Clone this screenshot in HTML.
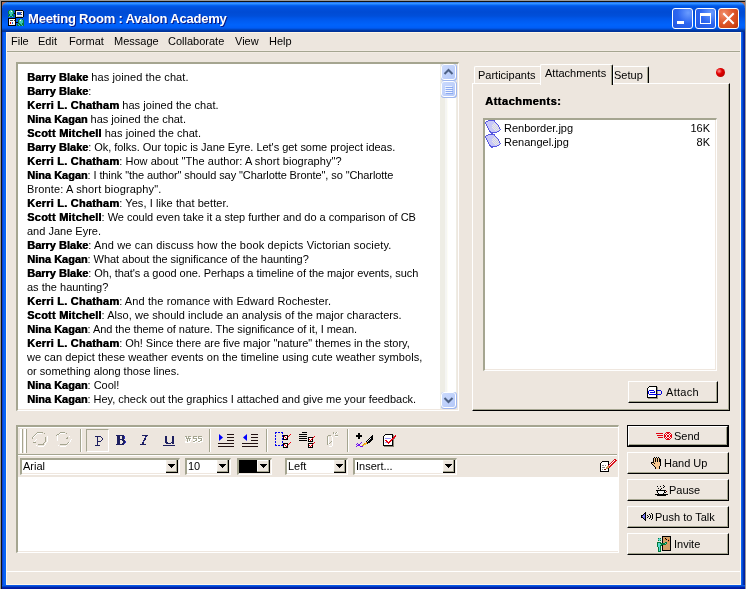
<!DOCTYPE html>
<html><head><meta charset="utf-8">
<style>
*{box-sizing:border-box}
html,body{margin:0;padding:0}
body{width:746px;height:589px;position:relative;overflow:hidden;background:#ede6de;font-family:"Liberation Sans",sans-serif;font-size:11px;color:#000}
.a{position:absolute}
.t{position:absolute;white-space:nowrap;line-height:14px}
.sunk{position:absolute;border-top:2px solid #a5a590;border-left:2px solid #a5a590;border-right:1px solid #fff;border-bottom:1px solid #fff;box-shadow:inset -1px -1px 0 #efe7df}
.btn{position:absolute;background:#ede6de;border-top:1px solid #fff;border-left:1px solid #fff;border-right:1px solid #000;border-bottom:1px solid #000;box-shadow:inset -1px -1px 0 #a5a590}
.combo{position:absolute;background:#fff;border-top:2px solid #a5a590;border-left:2px solid #a5a590;border-right:1px solid #fff;border-bottom:1px solid #fff;box-shadow:inset -1px -1px 0 #efe7df}
.dd{position:absolute;top:0;width:13px;height:14px;background:#ede6de;border-top:1px solid #efe7df;border-left:1px solid #efe7df;border-right:1px solid #000;border-bottom:1px solid #000;box-shadow:inset 1px 1px 0 #fff, inset -1px -1px 0 #a5a590}
.dd:after{content:"";position:absolute;left:3px;top:5px;border-left:3.5px solid transparent;border-right:3.5px solid transparent;border-top:4px solid #000}
.sep{position:absolute;top:429px;width:2px;height:23px;border-left:1px solid #a5a590;border-right:1px solid #fff}
#chat div{height:14px;line-height:14px;white-space:nowrap}
#chat b,.bb{text-shadow:0.5px 0 0 #000}
</style></head><body><div style="position:absolute;left:0;top:0;width:746px;height:589px;overflow:hidden;will-change:transform">
<!-- window frame -->
<div class="a" style="left:0;top:0;width:746px;height:1px;background:#9a9a9a"></div>
<div class="a" style="left:0;top:0;width:1px;height:589px;background:#9a9a9a"></div>
<div class="a" style="left:745px;top:0;width:1px;height:589px;background:#9a9a9a"></div>
<div class="a" style="left:1px;top:1px;width:744px;height:1px;background:#111"></div>
<div class="a" style="left:1px;top:1px;width:1px;height:588px;background:#111"></div>
<!-- title bar -->
<div class="a" style="left:2px;top:2px;width:743px;height:30px;border-radius:6px 6px 0 0;background:linear-gradient(to bottom,#0a5ff0 0px,#3d95ff 1px,#2b8cff 2px,#0a6af6 3px,#0058e8 4px,#0050dc 6px,#004bd4 10px,#004fda 14px,#0055e6 16px,#005cf2 19px,#0063fc 23px,#005df6 26px,#004ed6 27px,#0040b4 28px,#00339a 29px)"></div>
<div class="a" style="left:2px;top:2px;width:5px;height:5px;background:#b0705a;z-index:-1"></div><div class="a" style="left:740px;top:2px;width:5px;height:5px;background:#b0705a;z-index:-1"></div>
<!-- side frames -->
<div class="a" style="left:2px;top:32px;width:4px;height:557px;background:linear-gradient(to right,#0a28c8,#0855e8 1px,#0860f0 2px,#0a66f4 3px)"></div>
<div class="a" style="left:741px;top:32px;width:4px;height:557px;background:linear-gradient(to right,#1a70f8 0,#0858e8 1px,#0040c0 2px,#0020a0 3px)"></div>
<div class="a" style="left:2px;top:585px;width:743px;height:4px;background:linear-gradient(to bottom,#0860f0 0,#0850e0 1px,#0030b0 2px,#0018a0 3px)"></div>
<div class="a" style="left:6px;top:32px;width:1px;height:553px;background:#fff6e8"></div>
<div class="a" style="left:740px;top:32px;width:1px;height:553px;background:#fff6e8"></div>
<div class="a" style="left:6px;top:584px;width:735px;height:1px;background:#fff6e8"></div>
<div class="a" style="left:6px;top:32px;width:735px;height:1px;background:#fff6e8"></div>
<!-- title icon -->
<svg class="a" style="left:8px;top:10px" width="16" height="16" shape-rendering="crispEdges"><rect x="1" y="0" width="1" height="1" fill="#0a7a3a"/><rect x="2" y="0" width="2" height="1" fill="#38c8b8"/><rect x="4" y="0" width="1" height="1" fill="#0a7a3a"/><rect x="7" y="0" width="8" height="1" fill="#000"/><rect x="0" y="1" width="1" height="1" fill="#0a7a3a"/><rect x="1" y="1" width="2" height="1" fill="#38c8b8"/><rect x="3" y="1" width="1" height="1" fill="#f8f8f8"/><rect x="4" y="1" width="1" height="1" fill="#38c8b8"/><rect x="5" y="1" width="1" height="1" fill="#0a7a3a"/><rect x="7" y="1" width="1" height="1" fill="#000"/><rect x="8" y="1" width="7" height="1" fill="#f8f8f8"/><rect x="15" y="1" width="1" height="1" fill="#000"/><rect x="0" y="2" width="1" height="1" fill="#0a7a3a"/><rect x="1" y="2" width="4" height="1" fill="#38c8b8"/><rect x="5" y="2" width="1" height="1" fill="#0a7a3a"/><rect x="7" y="2" width="1" height="1" fill="#000"/><rect x="8" y="2" width="1" height="1" fill="#f8f8f8"/><rect x="9" y="2" width="4" height="1" fill="#2050c8"/><rect x="13" y="2" width="1" height="1" fill="#404040"/><rect x="14" y="2" width="1" height="1" fill="#f8f8f8"/><rect x="15" y="2" width="1" height="1" fill="#000"/><rect x="0" y="3" width="1" height="1" fill="#0a7a3a"/><rect x="1" y="3" width="4" height="1" fill="#38c8b8"/><rect x="5" y="3" width="1" height="1" fill="#0a7a3a"/><rect x="6" y="3" width="2" height="1" fill="#000"/><rect x="8" y="3" width="1" height="1" fill="#f8f8f8"/><rect x="9" y="3" width="4" height="1" fill="#2050c8"/><rect x="13" y="3" width="2" height="1" fill="#f8f8f8"/><rect x="15" y="3" width="1" height="1" fill="#000"/><rect x="1" y="4" width="1" height="1" fill="#0a7a3a"/><rect x="2" y="4" width="2" height="1" fill="#38c8b8"/><rect x="4" y="4" width="1" height="1" fill="#0a7a3a"/><rect x="7" y="4" width="1" height="1" fill="#000"/><rect x="8" y="4" width="1" height="1" fill="#f8f8f8"/><rect x="9" y="4" width="4" height="1" fill="#2050c8"/><rect x="13" y="4" width="1" height="1" fill="#404040"/><rect x="14" y="4" width="1" height="1" fill="#f8f8f8"/><rect x="15" y="4" width="1" height="1" fill="#000"/><rect x="0" y="5" width="2" height="1" fill="#0a7a3a"/><rect x="2" y="5" width="2" height="1" fill="#38c8b8"/><rect x="4" y="5" width="2" height="1" fill="#0a7a3a"/><rect x="7" y="5" width="1" height="1" fill="#000"/><rect x="8" y="5" width="7" height="1" fill="#f8f8f8"/><rect x="15" y="5" width="1" height="1" fill="#000"/><rect x="0" y="6" width="1" height="1" fill="#0a7a3a"/><rect x="1" y="6" width="1" height="1" fill="#38c8b8"/><rect x="2" y="6" width="2" height="1" fill="#0a7a3a"/><rect x="4" y="6" width="1" height="1" fill="#38c8b8"/><rect x="5" y="6" width="1" height="1" fill="#0a7a3a"/><rect x="7" y="6" width="1" height="1" fill="#000"/><rect x="8" y="6" width="1" height="1" fill="#f8f8f8"/><rect x="9" y="6" width="5" height="1" fill="#c8c8c8"/><rect x="14" y="6" width="1" height="1" fill="#f8f8f8"/><rect x="15" y="6" width="1" height="1" fill="#000"/><rect x="7" y="7" width="8" height="1" fill="#000"/><rect x="0" y="8" width="8" height="1" fill="#000"/><rect x="0" y="9" width="1" height="1" fill="#000"/><rect x="1" y="9" width="6" height="1" fill="#f8f8f8"/><rect x="7" y="9" width="1" height="1" fill="#000"/><rect x="11" y="9" width="1" height="1" fill="#0a7a3a"/><rect x="12" y="9" width="2" height="1" fill="#38c8b8"/><rect x="14" y="9" width="1" height="1" fill="#0a7a3a"/><rect x="0" y="10" width="1" height="1" fill="#000"/><rect x="1" y="10" width="1" height="1" fill="#f8f8f8"/><rect x="2" y="10" width="3" height="1" fill="#404040"/><rect x="5" y="10" width="1" height="1" fill="#f8f8f8"/><rect x="6" y="10" width="1" height="1" fill="#404040"/><rect x="7" y="10" width="1" height="1" fill="#000"/><rect x="10" y="10" width="1" height="1" fill="#0a7a3a"/><rect x="11" y="10" width="1" height="1" fill="#38c8b8"/><rect x="12" y="10" width="1" height="1" fill="#f8f8f8"/><rect x="13" y="10" width="2" height="1" fill="#38c8b8"/><rect x="15" y="10" width="1" height="1" fill="#0a7a3a"/><rect x="0" y="11" width="1" height="1" fill="#000"/><rect x="1" y="11" width="6" height="1" fill="#f8f8f8"/><rect x="7" y="11" width="1" height="1" fill="#000"/><rect x="10" y="11" width="1" height="1" fill="#0a7a3a"/><rect x="11" y="11" width="4" height="1" fill="#38c8b8"/><rect x="15" y="11" width="1" height="1" fill="#0a7a3a"/><rect x="0" y="12" width="1" height="1" fill="#000"/><rect x="1" y="12" width="1" height="1" fill="#f8f8f8"/><rect x="2" y="12" width="1" height="1" fill="#e00000"/><rect x="3" y="12" width="1" height="1" fill="#f8f8f8"/><rect x="4" y="12" width="1" height="1" fill="#2050c8"/><rect x="5" y="12" width="2" height="1" fill="#f8f8f8"/><rect x="7" y="12" width="3" height="1" fill="#000"/><rect x="10" y="12" width="1" height="1" fill="#0a7a3a"/><rect x="11" y="12" width="4" height="1" fill="#38c8b8"/><rect x="15" y="12" width="1" height="1" fill="#0a7a3a"/><rect x="0" y="13" width="1" height="1" fill="#000"/><rect x="1" y="13" width="1" height="1" fill="#f8f8f8"/><rect x="2" y="13" width="1" height="1" fill="#e00000"/><rect x="3" y="13" width="1" height="1" fill="#f8f8f8"/><rect x="4" y="13" width="1" height="1" fill="#2050c8"/><rect x="5" y="13" width="2" height="1" fill="#f8f8f8"/><rect x="7" y="13" width="1" height="1" fill="#000"/><rect x="10" y="13" width="2" height="1" fill="#0a7a3a"/><rect x="12" y="13" width="2" height="1" fill="#38c8b8"/><rect x="14" y="13" width="2" height="1" fill="#0a7a3a"/><rect x="0" y="14" width="1" height="1" fill="#000"/><rect x="1" y="14" width="6" height="1" fill="#f8f8f8"/><rect x="7" y="14" width="1" height="1" fill="#000"/><rect x="9" y="14" width="1" height="1" fill="#0a7a3a"/><rect x="10" y="14" width="1" height="1" fill="#38c8b8"/><rect x="11" y="14" width="2" height="1" fill="#0a7a3a"/><rect x="13" y="14" width="1" height="1" fill="#38c8b8"/><rect x="14" y="14" width="2" height="1" fill="#0a7a3a"/><rect x="0" y="15" width="8" height="1" fill="#000"/><rect x="9" y="15" width="2" height="1" fill="#0a7a3a"/><rect x="11" y="15" width="1" height="1" fill="#38c8b8"/><rect x="12" y="15" width="2" height="1" fill="#0a7a3a"/><rect x="14" y="15" width="1" height="1" fill="#38c8b8"/><rect x="15" y="15" width="1" height="1" fill="#0a7a3a"/></svg>
<div class="t" style="left:28px;top:10px;font-size:13px;font-weight:bold;color:#fff;line-height:18px;text-shadow:1px 1px 0 #0a1883;letter-spacing:-0.2px">Meeting Room : Avalon Academy</div>
<!-- window buttons -->
<div class="a" style="left:672px;top:8px;width:21px;height:21px;border:1px solid #fff;border-radius:3px;background:radial-gradient(circle at 80% 20%,#6a9cff,#2d66f0 50%,#1f55e0)"><div class="a" style="left:4px;top:12px;width:7px;height:3px;background:#fff"></div></div>
<div class="a" style="left:695px;top:8px;width:21px;height:21px;border:1px solid #fff;border-radius:3px;background:radial-gradient(circle at 80% 20%,#6a9cff,#2d66f0 50%,#1f55e0)"><div class="a" style="left:4px;top:4px;width:11px;height:11px;border:1px solid #fff;border-top-width:3px"></div></div>
<div class="a" style="left:718px;top:8px;width:21px;height:21px;border:1px solid #fff;border-radius:3px;background:radial-gradient(circle at 25% 25%,#f0906c,#e0582c 45%,#d04818 75%,#b83008)">
 <svg class="a" style="left:0;top:0" width="19" height="19"><path d="M5 5 L14 14 M14 5 L5 14" stroke="#fff" stroke-width="2" stroke-linecap="square"/></svg></div>
<!-- menu -->
<div class="t" style="left:11px;top:34px">File</div>
<div class="t" style="left:38px;top:34px">Edit</div>
<div class="t" style="left:69px;top:34px">Format</div>
<div class="t" style="left:114px;top:34px">Message</div>
<div class="t" style="left:168px;top:34px">Collaborate</div>
<div class="t" style="left:235px;top:34px">View</div>
<div class="t" style="left:269px;top:34px">Help</div>
<div class="a" style="left:7px;top:51px;width:733px;height:1px;background:#a5a590"></div>
<div class="a" style="left:7px;top:52px;width:733px;height:1px;background:#f3ece4"></div><div class="a" style="left:7px;top:50px;width:733px;height:1px;background:#f1eae2"></div>
<!-- chat box -->
<div class="sunk" style="left:16px;top:62px;width:443px;height:349px;background:#fff"></div>
<div id="chat" class="a" style="left:27px;top:70px;width:410px">
<div><b>Barry Blake</b><span style="letter-spacing:0.095px"> has joined the chat.</span></div>
<div><b>Barry Blake</b>:</div>
<div><b style="letter-spacing:0.22px">Kerri L. Chatham</b><span style="letter-spacing:0.048px"> has joined the chat.</span></div>
<div><b>Nina Kagan</b> has joined the chat.</div>
<div><b style="letter-spacing:0.22px">Scott Mitchell</b><span style="letter-spacing:0.048px"> has joined the chat.</span></div>
<div><b>Barry Blake</b><span style="letter-spacing:-0.030px">: Ok, folks. Our topic is Jane Eyre. Let's get some project ideas.</span></div>
<div><b style="letter-spacing:0.22px">Kerri L. Chatham</b><span style="letter-spacing:0.057px">: How about "The author: A short biography"?</span></div>
<div><b>Nina Kagan</b><span style="letter-spacing:-0.090px">: I think "the author" should say "Charlotte Bronte", so "Charlotte</span></div>
<div><span style="letter-spacing:0.148px">Bronte: A short biography".</span></div>
<div><b style="letter-spacing:0.22px">Kerri L. Chatham</b><span style="letter-spacing:0.077px">: Yes, I like that better.</span></div>
<div><b style="letter-spacing:0.22px">Scott Mitchell</b><span style="letter-spacing:-0.016px">: We could even take it a step further and do a comparison of CB</span></div>
<div>and Jane Eyre.</div>
<div><b>Barry Blake</b><span style="letter-spacing:0.150px">: And we can discuss how the book depicts Victorian society.</span></div>
<div><b>Nina Kagan</b><span style="letter-spacing:-0.043px">: What about the significance of the haunting?</span></div>
<div><b>Barry Blake</b><span style="letter-spacing:-0.058px">: Oh, that's a good one. Perhaps a timeline of the major events, such</span></div>
<div>as the haunting?</div>
<div><b style="letter-spacing:0.22px">Kerri L. Chatham</b><span style="letter-spacing:0.100px">: And the romance with Edward Rochester.</span></div>
<div><b style="letter-spacing:0.22px">Scott Mitchell</b><span style="letter-spacing:0.048px">: Also, we should include an analysis of the major characters.</span></div>
<div><b>Nina Kagan</b><span style="letter-spacing:-0.052px">: And the theme of nature. The significance of it, I mean.</span></div>
<div><b style="letter-spacing:0.22px">Kerri L. Chatham</b><span style="letter-spacing:-0.032px">: Oh! Since there are five major "nature" themes in the story,</span></div>
<div><span style="letter-spacing:0.051px">we can depict these weather events on the timeline using cute weather symbols,</span></div>
<div>or something along those lines.</div>
<div><b>Nina Kagan</b>: Cool!</div>
<div><b>Nina Kagan</b><span style="letter-spacing:-0.030px">: Hey, check out the graphics I attached and give me your feedback.</span></div>
</div>
<!-- scrollbar -->
<div class="a" style="left:440px;top:64px;width:17px;height:345px;background:linear-gradient(to right,#eeede5 0,#eeede5 5px,#f5f5f3 5px,#f5f5f3 7px,#fdfdf6 7px,#fdfdf6 8px,#fff 8px,#fff 16px,#eeede5 16px)"></div>
<div class="a" style="left:441px;top:64px;width:16px;height:17px;border-radius:3px;background:#9fb6ee">
 <div class="a" style="left:0;top:0;width:15px;height:16px;border:1px solid #fff;border-radius:3px;background:linear-gradient(135deg,#cbdafd,#b4c8f8)">
 <svg class="a" style="left:0;top:0" width="13" height="14"><path d="M2.5 9 L6.5 5 L10.5 9" fill="none" stroke="#4d6185" stroke-width="2"/></svg></div></div>
<div class="a" style="left:441px;top:81px;width:16px;height:17px;border-radius:3px;background:#9fb6ee">
 <div class="a" style="left:0;top:0;width:15px;height:16px;border:1px solid #fff;border-radius:3px;background:linear-gradient(135deg,#cbdafd,#b4c8f8)">
 <div class="a" style="left:3px;top:4px;width:7px;height:1px;background:#eef3ff;box-shadow:0 2px 0 #eef3ff,0 4px 0 #eef3ff,0 6px 0 #eef3ff"></div>
 <div class="a" style="left:4px;top:5px;width:7px;height:1px;background:#8caaf0;box-shadow:0 2px 0 #8caaf0,0 4px 0 #8caaf0,0 6px 0 #8caaf0"></div>
</div></div>
<div class="a" style="left:441px;top:392px;width:16px;height:17px;border-radius:3px;background:#9fb6ee">
 <div class="a" style="left:0;top:0;width:15px;height:16px;border:1px solid #fff;border-radius:3px;background:linear-gradient(135deg,#cbdafd,#b4c8f8)">
 <svg class="a" style="left:0;top:0" width="13" height="14"><path d="M2.5 5 L6.5 9 L10.5 5" fill="none" stroke="#4d6185" stroke-width="2"/></svg></div></div>
<!-- tabs panel -->
<div class="a" style="left:472px;top:83px;width:258px;height:328px;border-top:1px solid #fff;border-left:1px solid #fff;border-right:1px solid #000;border-bottom:1px solid #000;box-shadow:inset -1px -1px 0 #a5a590"></div>
<!-- Participants tab -->
<div class="a" style="left:474px;top:66px;width:66px;height:17px;border-top:1px solid #fff;border-left:1px solid #fff;border-radius:2px 0 0 0;background:#ede6de"></div>
<div class="t" style="left:478px;top:68px">Participants</div>
<!-- Setup tab -->
<div class="a" style="left:613px;top:66px;width:36px;height:17px;border-top:1px solid #fff;border-left:1px solid #fff;border-right:1px solid #000;box-shadow:inset -1px 0 0 #a5a590;border-radius:0 2px 0 0;background:#ede6de"></div>
<div class="a" style="left:613px;top:83px;width:36px;height:1px;background:#fff"></div>
<div class="t" style="left:614px;top:68px">Setup</div>
<!-- Attachments tab active -->
<div class="a" style="left:540px;top:64px;width:73px;height:21px;border-top:1px solid #fff;border-left:1px solid #fff;border-right:1px solid #000;box-shadow:inset -1px 0 0 #a5a590;border-radius:2px 2px 0 0;background:#ede6de"></div>
<div class="t" style="left:545px;top:66px">Attachments</div>
<!-- red dot -->
<div class="a" style="left:716px;top:68px;width:9px;height:9px;border-radius:50%;background:radial-gradient(circle at 35% 35%,#ff9090 0,#e00000 35%,#c00000 70%,#800000)"></div>
<div class="t bb" style="left:485px;top:94px;font-weight:bold;letter-spacing:0.5px">Attachments:</div>
<!-- list -->
<div class="sunk" style="left:483px;top:118px;width:234px;height:253px;background:#fff"></div>
<svg class="a" style="left:485px;top:120px" width="16" height="14" shape-rendering="crispEdges"><rect x="3" y="0" width="7" height="1" fill="#5858e0"/><rect x="1" y="1" width="2" height="1" fill="#5858e0"/><rect x="3" y="1" width="6" height="1" fill="#c8c8f8"/><rect x="9" y="1" width="1" height="1" fill="#5858e0"/><rect x="0" y="2" width="1" height="1" fill="#5858e0"/><rect x="1" y="2" width="9" height="1" fill="#c8c8f8"/><rect x="10" y="2" width="1" height="1" fill="#5858e0"/><rect x="0" y="3" width="1" height="1" fill="#5858e0"/><rect x="1" y="3" width="8" height="1" fill="#c8c8f8"/><rect x="9" y="3" width="1" height="1" fill="#eeeedc"/><rect x="10" y="3" width="1" height="1" fill="#c8c8f8"/><rect x="11" y="3" width="1" height="1" fill="#5858e0"/><rect x="1" y="4" width="1" height="1" fill="#5858e0"/><rect x="2" y="4" width="6" height="1" fill="#c8c8f8"/><rect x="8" y="4" width="1" height="1" fill="#eeeedc"/><rect x="9" y="4" width="1" height="1" fill="#c8c8f8"/><rect x="10" y="4" width="1" height="1" fill="#eeeedc"/><rect x="11" y="4" width="1" height="1" fill="#c8c8f8"/><rect x="12" y="4" width="1" height="1" fill="#5858e0"/><rect x="1" y="5" width="1" height="1" fill="#5858e0"/><rect x="2" y="5" width="5" height="1" fill="#c8c8f8"/><rect x="7" y="5" width="1" height="1" fill="#eeeedc"/><rect x="8" y="5" width="1" height="1" fill="#c8c8f8"/><rect x="9" y="5" width="1" height="1" fill="#eeeedc"/><rect x="10" y="5" width="1" height="1" fill="#c8c8f8"/><rect x="11" y="5" width="1" height="1" fill="#eeeedc"/><rect x="12" y="5" width="1" height="1" fill="#c8c8f8"/><rect x="13" y="5" width="1" height="1" fill="#5858e0"/><rect x="2" y="6" width="1" height="1" fill="#5858e0"/><rect x="3" y="6" width="5" height="1" fill="#c8c8f8"/><rect x="8" y="6" width="1" height="1" fill="#eeeedc"/><rect x="9" y="6" width="1" height="1" fill="#c8c8f8"/><rect x="10" y="6" width="1" height="1" fill="#eeeedc"/><rect x="11" y="6" width="1" height="1" fill="#c8c8f8"/><rect x="12" y="6" width="1" height="1" fill="#eeeedc"/><rect x="13" y="6" width="1" height="1" fill="#5858e0"/><rect x="2" y="7" width="1" height="1" fill="#5858e0"/><rect x="3" y="7" width="4" height="1" fill="#c8c8f8"/><rect x="7" y="7" width="1" height="1" fill="#eeeedc"/><rect x="8" y="7" width="1" height="1" fill="#c8c8f8"/><rect x="9" y="7" width="1" height="1" fill="#eeeedc"/><rect x="10" y="7" width="1" height="1" fill="#c8c8f8"/><rect x="11" y="7" width="1" height="1" fill="#eeeedc"/><rect x="12" y="7" width="1" height="1" fill="#c8c8f8"/><rect x="13" y="7" width="1" height="1" fill="#eeeedc"/><rect x="14" y="7" width="1" height="1" fill="#5858e0"/><rect x="3" y="8" width="1" height="1" fill="#5858e0"/><rect x="4" y="8" width="4" height="1" fill="#c8c8f8"/><rect x="8" y="8" width="1" height="1" fill="#eeeedc"/><rect x="9" y="8" width="1" height="1" fill="#c8c8f8"/><rect x="10" y="8" width="1" height="1" fill="#eeeedc"/><rect x="11" y="8" width="1" height="1" fill="#c8c8f8"/><rect x="12" y="8" width="1" height="1" fill="#eeeedc"/><rect x="13" y="8" width="1" height="1" fill="#c8c8f8"/><rect x="14" y="8" width="1" height="1" fill="#5858e0"/><rect x="3" y="9" width="1" height="1" fill="#5858e0"/><rect x="4" y="9" width="5" height="1" fill="#c8c8f8"/><rect x="9" y="9" width="1" height="1" fill="#eeeedc"/><rect x="10" y="9" width="1" height="1" fill="#c8c8f8"/><rect x="11" y="9" width="1" height="1" fill="#eeeedc"/><rect x="12" y="9" width="1" height="1" fill="#c8c8f8"/><rect x="13" y="9" width="1" height="1" fill="#eeeedc"/><rect x="14" y="9" width="1" height="1" fill="#c8c8f8"/><rect x="15" y="9" width="1" height="1" fill="#5858e0"/><rect x="4" y="10" width="1" height="1" fill="#5858e0"/><rect x="5" y="10" width="5" height="1" fill="#c8c8f8"/><rect x="10" y="10" width="1" height="1" fill="#eeeedc"/><rect x="11" y="10" width="1" height="1" fill="#c8c8f8"/><rect x="12" y="10" width="1" height="1" fill="#eeeedc"/><rect x="13" y="10" width="1" height="1" fill="#c8c8f8"/><rect x="14" y="10" width="1" height="1" fill="#5858e0"/><rect x="4" y="11" width="2" height="1" fill="#5858e0"/><rect x="6" y="11" width="6" height="1" fill="#c8c8f8"/><rect x="12" y="11" width="2" height="1" fill="#5858e0"/><rect x="5" y="12" width="7" height="1" fill="#5858e0"/><rect x="6" y="13" width="2" height="1" fill="#5858e0"/></svg>
<svg class="a" style="left:485px;top:134px" width="16" height="14" shape-rendering="crispEdges"><rect x="3" y="0" width="7" height="1" fill="#5858e0"/><rect x="1" y="1" width="2" height="1" fill="#5858e0"/><rect x="3" y="1" width="6" height="1" fill="#c8c8f8"/><rect x="9" y="1" width="1" height="1" fill="#5858e0"/><rect x="0" y="2" width="1" height="1" fill="#5858e0"/><rect x="1" y="2" width="9" height="1" fill="#c8c8f8"/><rect x="10" y="2" width="1" height="1" fill="#5858e0"/><rect x="0" y="3" width="1" height="1" fill="#5858e0"/><rect x="1" y="3" width="8" height="1" fill="#c8c8f8"/><rect x="9" y="3" width="1" height="1" fill="#eeeedc"/><rect x="10" y="3" width="1" height="1" fill="#c8c8f8"/><rect x="11" y="3" width="1" height="1" fill="#5858e0"/><rect x="1" y="4" width="1" height="1" fill="#5858e0"/><rect x="2" y="4" width="6" height="1" fill="#c8c8f8"/><rect x="8" y="4" width="1" height="1" fill="#eeeedc"/><rect x="9" y="4" width="1" height="1" fill="#c8c8f8"/><rect x="10" y="4" width="1" height="1" fill="#eeeedc"/><rect x="11" y="4" width="1" height="1" fill="#c8c8f8"/><rect x="12" y="4" width="1" height="1" fill="#5858e0"/><rect x="1" y="5" width="1" height="1" fill="#5858e0"/><rect x="2" y="5" width="5" height="1" fill="#c8c8f8"/><rect x="7" y="5" width="1" height="1" fill="#eeeedc"/><rect x="8" y="5" width="1" height="1" fill="#c8c8f8"/><rect x="9" y="5" width="1" height="1" fill="#eeeedc"/><rect x="10" y="5" width="1" height="1" fill="#c8c8f8"/><rect x="11" y="5" width="1" height="1" fill="#eeeedc"/><rect x="12" y="5" width="1" height="1" fill="#c8c8f8"/><rect x="13" y="5" width="1" height="1" fill="#5858e0"/><rect x="2" y="6" width="1" height="1" fill="#5858e0"/><rect x="3" y="6" width="5" height="1" fill="#c8c8f8"/><rect x="8" y="6" width="1" height="1" fill="#eeeedc"/><rect x="9" y="6" width="1" height="1" fill="#c8c8f8"/><rect x="10" y="6" width="1" height="1" fill="#eeeedc"/><rect x="11" y="6" width="1" height="1" fill="#c8c8f8"/><rect x="12" y="6" width="1" height="1" fill="#eeeedc"/><rect x="13" y="6" width="1" height="1" fill="#5858e0"/><rect x="2" y="7" width="1" height="1" fill="#5858e0"/><rect x="3" y="7" width="4" height="1" fill="#c8c8f8"/><rect x="7" y="7" width="1" height="1" fill="#eeeedc"/><rect x="8" y="7" width="1" height="1" fill="#c8c8f8"/><rect x="9" y="7" width="1" height="1" fill="#eeeedc"/><rect x="10" y="7" width="1" height="1" fill="#c8c8f8"/><rect x="11" y="7" width="1" height="1" fill="#eeeedc"/><rect x="12" y="7" width="1" height="1" fill="#c8c8f8"/><rect x="13" y="7" width="1" height="1" fill="#eeeedc"/><rect x="14" y="7" width="1" height="1" fill="#5858e0"/><rect x="3" y="8" width="1" height="1" fill="#5858e0"/><rect x="4" y="8" width="4" height="1" fill="#c8c8f8"/><rect x="8" y="8" width="1" height="1" fill="#eeeedc"/><rect x="9" y="8" width="1" height="1" fill="#c8c8f8"/><rect x="10" y="8" width="1" height="1" fill="#eeeedc"/><rect x="11" y="8" width="1" height="1" fill="#c8c8f8"/><rect x="12" y="8" width="1" height="1" fill="#eeeedc"/><rect x="13" y="8" width="1" height="1" fill="#c8c8f8"/><rect x="14" y="8" width="1" height="1" fill="#5858e0"/><rect x="3" y="9" width="1" height="1" fill="#5858e0"/><rect x="4" y="9" width="5" height="1" fill="#c8c8f8"/><rect x="9" y="9" width="1" height="1" fill="#eeeedc"/><rect x="10" y="9" width="1" height="1" fill="#c8c8f8"/><rect x="11" y="9" width="1" height="1" fill="#eeeedc"/><rect x="12" y="9" width="1" height="1" fill="#c8c8f8"/><rect x="13" y="9" width="1" height="1" fill="#eeeedc"/><rect x="14" y="9" width="1" height="1" fill="#c8c8f8"/><rect x="15" y="9" width="1" height="1" fill="#5858e0"/><rect x="4" y="10" width="1" height="1" fill="#5858e0"/><rect x="5" y="10" width="5" height="1" fill="#c8c8f8"/><rect x="10" y="10" width="1" height="1" fill="#eeeedc"/><rect x="11" y="10" width="1" height="1" fill="#c8c8f8"/><rect x="12" y="10" width="1" height="1" fill="#eeeedc"/><rect x="13" y="10" width="1" height="1" fill="#c8c8f8"/><rect x="14" y="10" width="1" height="1" fill="#5858e0"/><rect x="4" y="11" width="2" height="1" fill="#5858e0"/><rect x="6" y="11" width="6" height="1" fill="#c8c8f8"/><rect x="12" y="11" width="2" height="1" fill="#5858e0"/><rect x="5" y="12" width="7" height="1" fill="#5858e0"/><rect x="6" y="13" width="2" height="1" fill="#5858e0"/></svg>
<div class="t" style="left:504px;top:121px">Renborder.jpg</div>
<div class="t" style="left:504px;top:135px">Renangel.jpg</div>
<div class="t" style="left:660px;top:121px;width:50px;text-align:right">16K</div>
<div class="t" style="left:660px;top:135px;width:50px;text-align:right">8K</div>
<!-- attach button -->
<div class="btn" style="left:628px;top:381px;width:90px;height:22px"></div>
<svg class="a" style="left:647px;top:386px" width="16" height="13" shape-rendering="crispEdges"><rect x="2" y="0" width="8" height="1" fill="#000"/><rect x="1" y="1" width="1" height="1" fill="#000"/><rect x="2" y="1" width="7" height="1" fill="#fff"/><rect x="9" y="1" width="1" height="1" fill="#000"/><rect x="10" y="1" width="1" height="1" fill="#9a968a"/><rect x="0" y="2" width="1" height="1" fill="#000"/><rect x="1" y="2" width="8" height="1" fill="#fff"/><rect x="9" y="2" width="1" height="1" fill="#000"/><rect x="10" y="2" width="1" height="1" fill="#9a968a"/><rect x="0" y="3" width="1" height="1" fill="#000"/><rect x="1" y="3" width="8" height="1" fill="#fff"/><rect x="9" y="3" width="1" height="1" fill="#000"/><rect x="10" y="3" width="1" height="1" fill="#9a968a"/><rect x="0" y="4" width="1" height="1" fill="#000"/><rect x="1" y="4" width="1" height="1" fill="#fff"/><rect x="2" y="4" width="5" height="1" fill="#0000e0"/><rect x="7" y="4" width="2" height="1" fill="#fff"/><rect x="9" y="4" width="1" height="1" fill="#000"/><rect x="10" y="4" width="4" height="1" fill="#0000e0"/><rect x="0" y="5" width="1" height="1" fill="#000"/><rect x="1" y="5" width="1" height="1" fill="#0000e0"/><rect x="2" y="5" width="5" height="1" fill="#fff"/><rect x="7" y="5" width="1" height="1" fill="#0000e0"/><rect x="8" y="5" width="1" height="1" fill="#fff"/><rect x="9" y="5" width="1" height="1" fill="#000"/><rect x="10" y="5" width="1" height="1" fill="#9a968a"/><rect x="14" y="5" width="1" height="1" fill="#0000e0"/><rect x="0" y="6" width="1" height="1" fill="#000"/><rect x="1" y="6" width="1" height="1" fill="#0000e0"/><rect x="2" y="6" width="1" height="1" fill="#fff"/><rect x="3" y="6" width="5" height="1" fill="#0000e0"/><rect x="8" y="6" width="1" height="1" fill="#fff"/><rect x="9" y="6" width="1" height="1" fill="#000"/><rect x="10" y="6" width="1" height="1" fill="#9a968a"/><rect x="14" y="6" width="1" height="1" fill="#0000e0"/><rect x="0" y="7" width="1" height="1" fill="#000"/><rect x="1" y="7" width="1" height="1" fill="#0000e0"/><rect x="2" y="7" width="7" height="1" fill="#fff"/><rect x="9" y="7" width="1" height="1" fill="#000"/><rect x="10" y="7" width="1" height="1" fill="#9a968a"/><rect x="14" y="7" width="1" height="1" fill="#0000e0"/><rect x="0" y="8" width="1" height="1" fill="#000"/><rect x="1" y="8" width="1" height="1" fill="#fff"/><rect x="2" y="8" width="12" height="1" fill="#0000e0"/><rect x="0" y="9" width="1" height="1" fill="#000"/><rect x="1" y="9" width="8" height="1" fill="#fff"/><rect x="9" y="9" width="1" height="1" fill="#000"/><rect x="10" y="9" width="1" height="1" fill="#9a968a"/><rect x="0" y="10" width="1" height="1" fill="#000"/><rect x="1" y="10" width="8" height="1" fill="#fff"/><rect x="9" y="10" width="1" height="1" fill="#000"/><rect x="10" y="10" width="1" height="1" fill="#9a968a"/><rect x="0" y="11" width="10" height="1" fill="#000"/><rect x="10" y="11" width="1" height="1" fill="#9a968a"/><rect x="1" y="12" width="10" height="1" fill="#9a968a"/></svg>
<div class="t" style="left:666px;top:385px;letter-spacing:0.3px">Attach</div>
<!-- editor box -->
<div class="sunk" style="left:16px;top:425px;width:603px;height:128px;background:#ede6de"></div>
<div class="a" style="left:18px;top:427px;width:600px;height:1px;background:#fff"></div>
<div class="a" style="left:18px;top:477px;width:600px;height:74px;background:#fff"></div>
<div class="a" style="left:18px;top:454px;width:599px;height:1px;background:#a5a590"></div>
<div class="a" style="left:18px;top:455px;width:599px;height:1px;background:#fff"></div>
<!-- grip -->
<div class="a" style="left:20px;top:429px;width:3px;height:24px;border-left:2px solid #fff;border-right:1px solid #a5a590"></div>
<div class="a" style="left:24px;top:429px;width:3px;height:24px;border-left:2px solid #fff;border-right:1px solid #a5a590"></div>
<!-- undo/redo disabled -->
<svg class="a" style="left:32px;top:432px" width="16" height="15" shape-rendering="crispEdges"><rect x="5" y="0" width="6" height="1" fill="#a5a590"/><rect x="4" y="1" width="1" height="1" fill="#a5a590"/><rect x="5" y="1" width="5" height="1" fill="#fff"/><rect x="12" y="1" width="1" height="1" fill="#a5a590"/><rect x="3" y="2" width="1" height="1" fill="#a5a590"/><rect x="4" y="2" width="1" height="1" fill="#fff"/><rect x="2" y="3" width="1" height="1" fill="#a5a590"/><rect x="3" y="3" width="1" height="1" fill="#fff"/><rect x="1" y="4" width="1" height="1" fill="#a5a590"/><rect x="2" y="4" width="1" height="1" fill="#fff"/><rect x="15" y="4" width="1" height="1" fill="#fff"/><rect x="0" y="5" width="1" height="1" fill="#a5a590"/><rect x="1" y="5" width="1" height="1" fill="#fff"/><rect x="13" y="5" width="1" height="1" fill="#a5a590"/><rect x="15" y="5" width="1" height="1" fill="#fff"/><rect x="0" y="6" width="1" height="1" fill="#a5a590"/><rect x="13" y="6" width="1" height="1" fill="#a5a590"/><rect x="15" y="6" width="1" height="1" fill="#fff"/><rect x="4" y="7" width="1" height="1" fill="#fff"/><rect x="13" y="7" width="1" height="1" fill="#a5a590"/><rect x="15" y="7" width="1" height="1" fill="#fff"/><rect x="3" y="8" width="1" height="1" fill="#fff"/><rect x="13" y="8" width="1" height="1" fill="#a5a590"/><rect x="15" y="8" width="1" height="1" fill="#fff"/><rect x="2" y="9" width="1" height="1" fill="#fff"/><rect x="13" y="9" width="1" height="1" fill="#a5a590"/><rect x="15" y="9" width="1" height="1" fill="#fff"/><rect x="1" y="10" width="3" height="1" fill="#a5a590"/><rect x="12" y="10" width="1" height="1" fill="#a5a590"/><rect x="14" y="10" width="1" height="1" fill="#fff"/><rect x="11" y="11" width="1" height="1" fill="#a5a590"/><rect x="13" y="11" width="1" height="1" fill="#fff"/><rect x="6" y="12" width="6" height="1" fill="#a5a590"/><rect x="13" y="12" width="1" height="1" fill="#fff"/><rect x="4" y="13" width="1" height="1" fill="#fff"/><rect x="12" y="13" width="1" height="1" fill="#fff"/><rect x="6" y="14" width="6" height="1" fill="#fff"/></svg>
<svg class="a" style="left:56px;top:432px" width="16" height="15" shape-rendering="crispEdges"><rect x="4" y="0" width="5" height="1" fill="#a5a590"/><rect x="3" y="1" width="1" height="1" fill="#a5a590"/><rect x="4" y="1" width="5" height="1" fill="#fff"/><rect x="10" y="1" width="1" height="1" fill="#a5a590"/><rect x="1" y="2" width="2" height="1" fill="#a5a590"/><rect x="3" y="2" width="1" height="1" fill="#fff"/><rect x="0" y="3" width="1" height="1" fill="#a5a590"/><rect x="1" y="3" width="1" height="1" fill="#fff"/><rect x="1" y="4" width="1" height="1" fill="#fff"/><rect x="13" y="4" width="1" height="1" fill="#fff"/><rect x="1" y="5" width="1" height="1" fill="#fff"/><rect x="11" y="5" width="1" height="1" fill="#a5a590"/><rect x="1" y="6" width="1" height="1" fill="#fff"/><rect x="10" y="6" width="2" height="1" fill="#a5a590"/><rect x="1" y="7" width="1" height="1" fill="#fff"/><rect x="15" y="7" width="1" height="1" fill="#fff"/><rect x="1" y="8" width="1" height="1" fill="#fff"/><rect x="14" y="8" width="1" height="1" fill="#fff"/><rect x="14" y="9" width="1" height="1" fill="#fff"/><rect x="12" y="10" width="1" height="1" fill="#a5a590"/><rect x="13" y="10" width="1" height="1" fill="#fff"/><rect x="11" y="11" width="1" height="1" fill="#a5a590"/><rect x="12" y="11" width="1" height="1" fill="#fff"/><rect x="4" y="12" width="7" height="1" fill="#a5a590"/><rect x="2" y="13" width="1" height="1" fill="#fff"/><rect x="10" y="13" width="1" height="1" fill="#fff"/><rect x="4" y="14" width="6" height="1" fill="#fff"/></svg>
<div class="sep" style="left:80px"></div>
<!-- P pressed -->
<div class="a" style="left:86px;top:429px;width:23px;height:23px;border-top:1px solid #a5a590;border-left:1px solid #a5a590;border-right:1px solid #fff;border-bottom:1px solid #fff"></div>
<svg class="a" style="left:95px;top:436px" width="8" height="10" shape-rendering="crispEdges"><rect x="0" y="0" width="6" height="1" fill="#1e2060"/><rect x="2" y="1" width="1" height="1" fill="#1e2060"/><rect x="6" y="1" width="1" height="1" fill="#1e2060"/><rect x="2" y="2" width="1" height="1" fill="#1e2060"/><rect x="7" y="2" width="1" height="1" fill="#1e2060"/><rect x="2" y="3" width="1" height="1" fill="#1e2060"/><rect x="7" y="3" width="1" height="1" fill="#1e2060"/><rect x="2" y="4" width="1" height="1" fill="#1e2060"/><rect x="6" y="4" width="1" height="1" fill="#1e2060"/><rect x="2" y="5" width="4" height="1" fill="#1e2060"/><rect x="2" y="6" width="1" height="1" fill="#1e2060"/><rect x="2" y="7" width="1" height="1" fill="#1e2060"/><rect x="2" y="8" width="1" height="1" fill="#1e2060"/><rect x="0" y="9" width="5" height="1" fill="#1e2060"/></svg>
<svg class="a" style="left:116px;top:435px" width="10" height="10" shape-rendering="crispEdges"><rect x="0" y="0" width="8" height="1" fill="#1e2060"/><rect x="1" y="1" width="3" height="1" fill="#1e2060"/><rect x="6" y="1" width="2" height="1" fill="#1e2060"/><rect x="8" y="1" width="1" height="1" fill="#3030c0"/><rect x="1" y="2" width="3" height="1" fill="#1e2060"/><rect x="6" y="2" width="2" height="1" fill="#1e2060"/><rect x="8" y="2" width="1" height="1" fill="#3030c0"/><rect x="1" y="3" width="3" height="1" fill="#1e2060"/><rect x="6" y="3" width="2" height="1" fill="#1e2060"/><rect x="8" y="3" width="1" height="1" fill="#3030c0"/><rect x="1" y="4" width="7" height="1" fill="#1e2060"/><rect x="1" y="5" width="3" height="1" fill="#1e2060"/><rect x="6" y="5" width="3" height="1" fill="#1e2060"/><rect x="1" y="6" width="3" height="1" fill="#1e2060"/><rect x="7" y="6" width="2" height="1" fill="#1e2060"/><rect x="9" y="6" width="1" height="1" fill="#3030c0"/><rect x="1" y="7" width="3" height="1" fill="#1e2060"/><rect x="7" y="7" width="2" height="1" fill="#1e2060"/><rect x="9" y="7" width="1" height="1" fill="#3030c0"/><rect x="1" y="8" width="3" height="1" fill="#1e2060"/><rect x="6" y="8" width="2" height="1" fill="#1e2060"/><rect x="8" y="8" width="1" height="1" fill="#3030c0"/><rect x="0" y="9" width="8" height="1" fill="#1e2060"/></svg>
<svg class="a" style="left:140px;top:435px" width="8" height="10" shape-rendering="crispEdges"><rect x="2" y="0" width="6" height="1" fill="#1e2060"/><rect x="5" y="1" width="2" height="1" fill="#1e2060"/><rect x="5" y="2" width="1" height="1" fill="#3838c8"/><rect x="4" y="3" width="2" height="1" fill="#1e2060"/><rect x="4" y="4" width="2" height="1" fill="#1e2060"/><rect x="3" y="5" width="2" height="1" fill="#1e2060"/><rect x="3" y="6" width="1" height="1" fill="#3838c8"/><rect x="2" y="7" width="2" height="1" fill="#1e2060"/><rect x="2" y="8" width="2" height="1" fill="#1e2060"/><rect x="0" y="9" width="6" height="1" fill="#1e2060"/></svg>
<svg class="a" style="left:163px;top:436px" width="12" height="10" shape-rendering="crispEdges"><rect x="2" y="0" width="2" height="1" fill="#1e2060"/><rect x="9" y="0" width="2" height="1" fill="#1e2060"/><rect x="2" y="1" width="2" height="1" fill="#1e2060"/><rect x="9" y="1" width="2" height="1" fill="#1e2060"/><rect x="2" y="2" width="2" height="1" fill="#1e2060"/><rect x="9" y="2" width="2" height="1" fill="#1e2060"/><rect x="2" y="3" width="2" height="1" fill="#1e2060"/><rect x="9" y="3" width="2" height="1" fill="#1e2060"/><rect x="2" y="4" width="2" height="1" fill="#1e2060"/><rect x="9" y="4" width="2" height="1" fill="#1e2060"/><rect x="2" y="5" width="2" height="1" fill="#1e2060"/><rect x="9" y="5" width="2" height="1" fill="#1e2060"/><rect x="2" y="6" width="3" height="1" fill="#1e2060"/><rect x="8" y="6" width="3" height="1" fill="#1e2060"/><rect x="3" y="7" width="5" height="1" fill="#1e2060"/><rect x="9" y="7" width="2" height="1" fill="#1e2060"/><rect x="0" y="9" width="12" height="1" fill="#1e2060"/></svg>
<svg class="a" style="left:185px;top:436px" width="18" height="7" shape-rendering="crispEdges"><rect x="0" y="0" width="2" height="1" fill="#a5a590"/><rect x="3" y="0" width="3" height="1" fill="#a5a590"/><rect x="8" y="0" width="4" height="1" fill="#a5a590"/><rect x="13" y="0" width="4" height="1" fill="#a5a590"/><rect x="0" y="1" width="1" height="1" fill="#ffffff"/><rect x="1" y="1" width="1" height="1" fill="#a5a590"/><rect x="2" y="1" width="1" height="1" fill="#ffffff"/><rect x="3" y="1" width="1" height="1" fill="#a5a590"/><rect x="4" y="1" width="3" height="1" fill="#ffffff"/><rect x="8" y="1" width="1" height="1" fill="#a5a590"/><rect x="9" y="1" width="4" height="1" fill="#ffffff"/><rect x="13" y="1" width="1" height="1" fill="#a5a590"/><rect x="14" y="1" width="3" height="1" fill="#ffffff"/><rect x="0" y="2" width="1" height="1" fill="#ffffff"/><rect x="1" y="2" width="5" height="1" fill="#a5a590"/><rect x="6" y="2" width="1" height="1" fill="#ffffff"/><rect x="8" y="2" width="4" height="1" fill="#a5a590"/><rect x="12" y="2" width="1" height="1" fill="#ffffff"/><rect x="13" y="2" width="4" height="1" fill="#a5a590"/><rect x="17" y="2" width="1" height="1" fill="#ffffff"/><rect x="1" y="3" width="1" height="1" fill="#ffffff"/><rect x="2" y="3" width="1" height="1" fill="#a5a590"/><rect x="3" y="3" width="1" height="1" fill="#ffffff"/><rect x="4" y="3" width="1" height="1" fill="#a5a590"/><rect x="5" y="3" width="2" height="1" fill="#ffffff"/><rect x="8" y="3" width="3" height="1" fill="#ffffff"/><rect x="11" y="3" width="1" height="1" fill="#a5a590"/><rect x="12" y="3" width="4" height="1" fill="#ffffff"/><rect x="16" y="3" width="1" height="1" fill="#a5a590"/><rect x="17" y="3" width="1" height="1" fill="#ffffff"/><rect x="2" y="4" width="1" height="1" fill="#a5a590"/><rect x="3" y="4" width="1" height="1" fill="#ffffff"/><rect x="4" y="4" width="1" height="1" fill="#a5a590"/><rect x="5" y="4" width="1" height="1" fill="#ffffff"/><rect x="8" y="4" width="2" height="1" fill="#ffffff"/><rect x="10" y="4" width="2" height="1" fill="#a5a590"/><rect x="12" y="4" width="3" height="1" fill="#ffffff"/><rect x="15" y="4" width="2" height="1" fill="#a5a590"/><rect x="17" y="4" width="1" height="1" fill="#ffffff"/><rect x="0" y="5" width="2" height="1" fill="#ffffff"/><rect x="2" y="5" width="1" height="1" fill="#a5a590"/><rect x="3" y="5" width="3" height="1" fill="#ffffff"/><rect x="8" y="5" width="2" height="1" fill="#a5a590"/><rect x="10" y="5" width="3" height="1" fill="#ffffff"/><rect x="13" y="5" width="2" height="1" fill="#a5a590"/><rect x="15" y="5" width="3" height="1" fill="#ffffff"/><rect x="0" y="6" width="5" height="1" fill="#ffffff"/><rect x="8" y="6" width="3" height="1" fill="#ffffff"/><rect x="13" y="6" width="3" height="1" fill="#ffffff"/></svg>
<div class="sep" style="left:209px"></div>
<!-- indent -->
<svg class="a" style="left:217px;top:433px" width="18" height="15" viewBox="0 0 18 15"><path d="M2 1 L6 4.5 L2 8 Z" fill="#0000ff"/><path d="M10 1.5 H17 M10 4.5 H17 M10 7.5 H17 M1 10.5 H17 M1 13.5 H17" stroke="#201010" stroke-width="1"/></svg>
<svg class="a" style="left:241px;top:433px" width="18" height="15" viewBox="0 0 18 15"><path d="M6 1 L2 4.5 L6 8 Z" fill="#0000ff"/><path d="M10 1.5 H17 M10 4.5 H17 M10 7.5 H17 M1 10.5 H17 M1 13.5 H17" stroke="#201010" stroke-width="1"/></svg>
<div class="sep" style="left:266px"></div>
<!-- checklist icons -->
<svg class="a" style="left:275px;top:432px" width="16" height="16" shape-rendering="crispEdges"><rect x="0" y="0" width="2" height="1" fill="#0000f0"/><rect x="3" y="0" width="2" height="1" fill="#0000f0"/><rect x="6" y="0" width="2" height="1" fill="#0000f0"/><rect x="0" y="1" width="1" height="1" fill="#0000f0"/><rect x="7" y="1" width="1" height="1" fill="#0000f0"/><rect x="15" y="2" width="1" height="1" fill="#f00010"/><rect x="0" y="3" width="1" height="1" fill="#0000f0"/><rect x="7" y="3" width="1" height="1" fill="#0000f0"/><rect x="8" y="3" width="5" height="1" fill="#000"/><rect x="14" y="3" width="1" height="1" fill="#f00010"/><rect x="0" y="4" width="1" height="1" fill="#0000f0"/><rect x="7" y="4" width="1" height="1" fill="#0000f0"/><rect x="8" y="4" width="1" height="1" fill="#000"/><rect x="9" y="4" width="1" height="1" fill="#f00010"/><rect x="10" y="4" width="2" height="1" fill="#fff"/><rect x="12" y="4" width="1" height="1" fill="#000"/><rect x="13" y="4" width="1" height="1" fill="#f00010"/><rect x="8" y="5" width="1" height="1" fill="#000"/><rect x="9" y="5" width="1" height="1" fill="#fff"/><rect x="10" y="5" width="1" height="1" fill="#f00010"/><rect x="11" y="5" width="1" height="1" fill="#fff"/><rect x="12" y="5" width="1" height="1" fill="#000"/><rect x="0" y="6" width="1" height="1" fill="#0000f0"/><rect x="7" y="6" width="1" height="1" fill="#0000f0"/><rect x="8" y="6" width="1" height="1" fill="#000"/><rect x="9" y="6" width="2" height="1" fill="#fff"/><rect x="11" y="6" width="1" height="1" fill="#f00010"/><rect x="12" y="6" width="1" height="1" fill="#000"/><rect x="0" y="7" width="1" height="1" fill="#0000f0"/><rect x="7" y="7" width="1" height="1" fill="#0000f0"/><rect x="8" y="7" width="5" height="1" fill="#000"/><rect x="0" y="9" width="1" height="1" fill="#0000f0"/><rect x="7" y="9" width="1" height="1" fill="#0000f0"/><rect x="0" y="10" width="1" height="1" fill="#0000f0"/><rect x="7" y="10" width="1" height="1" fill="#0000f0"/><rect x="15" y="10" width="1" height="1" fill="#f00010"/><rect x="8" y="11" width="5" height="1" fill="#000"/><rect x="14" y="11" width="1" height="1" fill="#f00010"/><rect x="0" y="12" width="1" height="1" fill="#0000f0"/><rect x="7" y="12" width="1" height="1" fill="#0000f0"/><rect x="8" y="12" width="1" height="1" fill="#000"/><rect x="9" y="12" width="1" height="1" fill="#f00010"/><rect x="10" y="12" width="2" height="1" fill="#fff"/><rect x="12" y="12" width="1" height="1" fill="#000"/><rect x="13" y="12" width="1" height="1" fill="#f00010"/><rect x="0" y="13" width="2" height="1" fill="#0000f0"/><rect x="3" y="13" width="2" height="1" fill="#0000f0"/><rect x="6" y="13" width="2" height="1" fill="#0000f0"/><rect x="8" y="13" width="1" height="1" fill="#000"/><rect x="9" y="13" width="1" height="1" fill="#fff"/><rect x="10" y="13" width="1" height="1" fill="#f00010"/><rect x="11" y="13" width="1" height="1" fill="#fff"/><rect x="12" y="13" width="1" height="1" fill="#000"/><rect x="8" y="14" width="1" height="1" fill="#000"/><rect x="9" y="14" width="2" height="1" fill="#fff"/><rect x="11" y="14" width="1" height="1" fill="#f00010"/><rect x="12" y="14" width="1" height="1" fill="#000"/><rect x="8" y="15" width="5" height="1" fill="#000"/></svg>
<svg class="a" style="left:299px;top:432px" width="16" height="16" shape-rendering="crispEdges"><rect x="3" y="0" width="5" height="1" fill="#000"/><rect x="0" y="2" width="8" height="1" fill="#000"/><rect x="0" y="4" width="8" height="1" fill="#000"/><rect x="15" y="4" width="1" height="1" fill="#f00010"/><rect x="9" y="5" width="5" height="1" fill="#000"/><rect x="14" y="5" width="1" height="1" fill="#f00010"/><rect x="0" y="6" width="8" height="1" fill="#000"/><rect x="9" y="6" width="1" height="1" fill="#000"/><rect x="10" y="6" width="3" height="1" fill="#fff"/><rect x="13" y="6" width="1" height="1" fill="#f00010"/><rect x="9" y="7" width="1" height="1" fill="#000"/><rect x="10" y="7" width="1" height="1" fill="#f00010"/><rect x="11" y="7" width="1" height="1" fill="#fff"/><rect x="12" y="7" width="1" height="1" fill="#f00010"/><rect x="13" y="7" width="1" height="1" fill="#000"/><rect x="0" y="8" width="8" height="1" fill="#000"/><rect x="9" y="8" width="1" height="1" fill="#000"/><rect x="10" y="8" width="1" height="1" fill="#fff"/><rect x="11" y="8" width="1" height="1" fill="#f00010"/><rect x="12" y="8" width="1" height="1" fill="#fff"/><rect x="13" y="8" width="1" height="1" fill="#000"/><rect x="9" y="9" width="5" height="1" fill="#000"/><rect x="15" y="10" width="1" height="1" fill="#f00010"/><rect x="9" y="11" width="5" height="1" fill="#000"/><rect x="14" y="11" width="1" height="1" fill="#f00010"/><rect x="9" y="12" width="1" height="1" fill="#000"/><rect x="10" y="12" width="3" height="1" fill="#fff"/><rect x="13" y="12" width="1" height="1" fill="#f00010"/><rect x="9" y="13" width="1" height="1" fill="#000"/><rect x="10" y="13" width="1" height="1" fill="#f00010"/><rect x="11" y="13" width="1" height="1" fill="#fff"/><rect x="12" y="13" width="1" height="1" fill="#f00010"/><rect x="13" y="13" width="1" height="1" fill="#000"/><rect x="9" y="14" width="1" height="1" fill="#000"/><rect x="10" y="14" width="1" height="1" fill="#fff"/><rect x="11" y="14" width="1" height="1" fill="#f00010"/><rect x="12" y="14" width="1" height="1" fill="#fff"/><rect x="13" y="14" width="1" height="1" fill="#000"/><rect x="9" y="15" width="5" height="1" fill="#000"/></svg>
<svg class="a" style="left:327px;top:432px" width="12" height="15" shape-rendering="crispEdges"><rect x="6" y="0" width="1" height="1" fill="#a5a590"/><rect x="9" y="0" width="1" height="1" fill="#a5a590"/><rect x="10" y="0" width="1" height="1" fill="#fff"/><rect x="6" y="1" width="1" height="1" fill="#a5a590"/><rect x="7" y="1" width="1" height="1" fill="#fff"/><rect x="8" y="1" width="1" height="1" fill="#a5a590"/><rect x="9" y="1" width="1" height="1" fill="#fff"/><rect x="7" y="2" width="1" height="1" fill="#fff"/><rect x="1" y="3" width="3" height="1" fill="#a5a590"/><rect x="8" y="3" width="3" height="1" fill="#a5a590"/><rect x="0" y="4" width="1" height="1" fill="#a5a590"/><rect x="4" y="4" width="1" height="1" fill="#fff"/><rect x="8" y="4" width="3" height="1" fill="#fff"/><rect x="0" y="5" width="1" height="1" fill="#a5a590"/><rect x="1" y="5" width="1" height="1" fill="#fff"/><rect x="5" y="5" width="1" height="1" fill="#fff"/><rect x="0" y="6" width="1" height="1" fill="#a5a590"/><rect x="1" y="6" width="1" height="1" fill="#fff"/><rect x="5" y="6" width="1" height="1" fill="#fff"/><rect x="0" y="7" width="1" height="1" fill="#a5a590"/><rect x="1" y="7" width="1" height="1" fill="#fff"/><rect x="5" y="7" width="1" height="1" fill="#fff"/><rect x="0" y="8" width="1" height="1" fill="#a5a590"/><rect x="1" y="8" width="1" height="1" fill="#fff"/><rect x="5" y="8" width="1" height="1" fill="#fff"/><rect x="0" y="9" width="1" height="1" fill="#a5a590"/><rect x="1" y="9" width="1" height="1" fill="#fff"/><rect x="4" y="9" width="1" height="1" fill="#a5a590"/><rect x="5" y="9" width="1" height="1" fill="#fff"/><rect x="0" y="10" width="1" height="1" fill="#a5a590"/><rect x="1" y="10" width="1" height="1" fill="#fff"/><rect x="3" y="10" width="1" height="1" fill="#a5a590"/><rect x="5" y="10" width="1" height="1" fill="#fff"/><rect x="0" y="11" width="1" height="1" fill="#a5a590"/><rect x="1" y="11" width="1" height="1" fill="#fff"/><rect x="2" y="11" width="1" height="1" fill="#a5a590"/><rect x="5" y="11" width="1" height="1" fill="#fff"/><rect x="0" y="12" width="1" height="1" fill="#a5a590"/><rect x="2" y="12" width="1" height="1" fill="#fff"/><rect x="5" y="12" width="1" height="1" fill="#fff"/><rect x="5" y="13" width="1" height="1" fill="#fff"/><rect x="2" y="14" width="3" height="1" fill="#fff"/></svg>
<div class="sep" style="left:347px"></div>
<svg class="a" style="left:356px;top:433px" width="17" height="14" shape-rendering="crispEdges"><rect x="2" y="0" width="2" height="1" fill="#000"/><rect x="2" y="1" width="2" height="1" fill="#000"/><rect x="0" y="2" width="6" height="1" fill="#000"/><rect x="16" y="2" width="1" height="1" fill="#000"/><rect x="0" y="3" width="6" height="1" fill="#000"/><rect x="15" y="3" width="2" height="1" fill="#000"/><rect x="2" y="4" width="2" height="1" fill="#000"/><rect x="14" y="4" width="3" height="1" fill="#000"/><rect x="2" y="5" width="2" height="1" fill="#000"/><rect x="13" y="5" width="1" height="1" fill="#000"/><rect x="14" y="5" width="1" height="1" fill="#e8e8f0"/><rect x="15" y="5" width="2" height="1" fill="#000"/><rect x="12" y="6" width="1" height="1" fill="#000"/><rect x="13" y="6" width="1" height="1" fill="#e8e8f0"/><rect x="14" y="6" width="3" height="1" fill="#000"/><rect x="11" y="7" width="1" height="1" fill="#000"/><rect x="12" y="7" width="1" height="1" fill="#e8e8f0"/><rect x="13" y="7" width="3" height="1" fill="#000"/><rect x="10" y="8" width="1" height="1" fill="#000"/><rect x="11" y="8" width="1" height="1" fill="#e8e8f0"/><rect x="12" y="8" width="3" height="1" fill="#000"/><rect x="5" y="9" width="1" height="1" fill="#7010f0"/><rect x="10" y="9" width="1" height="1" fill="#f08010"/><rect x="11" y="9" width="3" height="1" fill="#000"/><rect x="1" y="10" width="1" height="1" fill="#7010f0"/><rect x="4" y="10" width="1" height="1" fill="#7010f0"/><rect x="8" y="10" width="1" height="1" fill="#f08010"/><rect x="9" y="10" width="2" height="1" fill="#f8c020"/><rect x="11" y="10" width="1" height="1" fill="#000"/><rect x="0" y="11" width="1" height="1" fill="#7010f0"/><rect x="2" y="11" width="2" height="1" fill="#7010f0"/><rect x="7" y="11" width="1" height="1" fill="#f08010"/><rect x="8" y="11" width="2" height="1" fill="#f8c020"/><rect x="1" y="12" width="3" height="1" fill="#7010f0"/><rect x="6" y="12" width="1" height="1" fill="#f08010"/><rect x="7" y="12" width="1" height="1" fill="#c0d040"/><rect x="0" y="13" width="1" height="1" fill="#7010f0"/><rect x="4" y="13" width="3" height="1" fill="#7010f0"/></svg>
<svg class="a" style="left:383px;top:434px" width="13" height="13" shape-rendering="crispEdges"><rect x="2" y="0" width="8" height="1" fill="#000"/><rect x="1" y="1" width="1" height="1" fill="#000"/><rect x="2" y="1" width="7" height="1" fill="#fff"/><rect x="9" y="1" width="1" height="1" fill="#000"/><rect x="10" y="1" width="1" height="1" fill="#8a8678"/><rect x="12" y="1" width="1" height="1" fill="#e80010"/><rect x="0" y="2" width="1" height="1" fill="#000"/><rect x="1" y="2" width="8" height="1" fill="#fff"/><rect x="9" y="2" width="1" height="1" fill="#000"/><rect x="10" y="2" width="1" height="1" fill="#8a8678"/><rect x="11" y="2" width="2" height="1" fill="#e80010"/><rect x="0" y="3" width="1" height="1" fill="#000"/><rect x="1" y="3" width="8" height="1" fill="#fff"/><rect x="9" y="3" width="1" height="1" fill="#000"/><rect x="10" y="3" width="2" height="1" fill="#e80010"/><rect x="0" y="4" width="1" height="1" fill="#000"/><rect x="1" y="4" width="1" height="1" fill="#fff"/><rect x="2" y="4" width="6" height="1" fill="#9898f8"/><rect x="8" y="4" width="1" height="1" fill="#fff"/><rect x="9" y="4" width="2" height="1" fill="#e80010"/><rect x="11" y="4" width="1" height="1" fill="#8a8678"/><rect x="0" y="5" width="1" height="1" fill="#000"/><rect x="1" y="5" width="7" height="1" fill="#fff"/><rect x="8" y="5" width="2" height="1" fill="#e80010"/><rect x="10" y="5" width="1" height="1" fill="#8a8678"/><rect x="0" y="6" width="1" height="1" fill="#000"/><rect x="1" y="6" width="1" height="1" fill="#fff"/><rect x="2" y="6" width="2" height="1" fill="#e80010"/><rect x="4" y="6" width="3" height="1" fill="#fff"/><rect x="7" y="6" width="2" height="1" fill="#e80010"/><rect x="9" y="6" width="1" height="1" fill="#000"/><rect x="10" y="6" width="1" height="1" fill="#8a8678"/><rect x="0" y="7" width="1" height="1" fill="#000"/><rect x="1" y="7" width="2" height="1" fill="#fff"/><rect x="3" y="7" width="2" height="1" fill="#e80010"/><rect x="5" y="7" width="1" height="1" fill="#fff"/><rect x="6" y="7" width="2" height="1" fill="#e80010"/><rect x="8" y="7" width="1" height="1" fill="#fff"/><rect x="9" y="7" width="1" height="1" fill="#000"/><rect x="10" y="7" width="1" height="1" fill="#8a8678"/><rect x="0" y="8" width="1" height="1" fill="#000"/><rect x="1" y="8" width="1" height="1" fill="#fff"/><rect x="2" y="8" width="2" height="1" fill="#9898f8"/><rect x="4" y="8" width="3" height="1" fill="#e80010"/><rect x="7" y="8" width="2" height="1" fill="#fff"/><rect x="9" y="8" width="1" height="1" fill="#000"/><rect x="10" y="8" width="1" height="1" fill="#8a8678"/><rect x="0" y="9" width="1" height="1" fill="#000"/><rect x="1" y="9" width="4" height="1" fill="#fff"/><rect x="5" y="9" width="1" height="1" fill="#e80010"/><rect x="6" y="9" width="3" height="1" fill="#fff"/><rect x="9" y="9" width="1" height="1" fill="#000"/><rect x="10" y="9" width="1" height="1" fill="#8a8678"/><rect x="0" y="10" width="1" height="1" fill="#000"/><rect x="1" y="10" width="8" height="1" fill="#fff"/><rect x="9" y="10" width="1" height="1" fill="#000"/><rect x="10" y="10" width="1" height="1" fill="#8a8678"/><rect x="0" y="11" width="10" height="1" fill="#000"/><rect x="10" y="11" width="1" height="1" fill="#8a8678"/><rect x="1" y="12" width="10" height="1" fill="#8a8678"/></svg>
<!-- format row -->
<div class="combo" style="left:20px;top:458px;width:160px;height:17px"><div class="t" style="left:1px;top:-1px">Arial</div><div class="a" style="left:144px;top:0;width:12px;height:13px;background:#ede6de;border-right:1px solid #000;border-bottom:1px solid #000;box-shadow:inset -1px -1px 0 #a5a590, inset 1px 1px 0 #f3efe8"><div class="a" style="left:2px;top:4px;width:7px;height:1px;background:#000"></div><div class="a" style="left:3px;top:5px;width:5px;height:1px;background:#000"></div><div class="a" style="left:4px;top:6px;width:3px;height:1px;background:#000"></div><div class="a" style="left:5px;top:7px;width:1px;height:1px;background:#000"></div></div></div>
<div class="combo" style="left:185px;top:458px;width:46px;height:17px"><div class="t" style="left:1px;top:-1px">10</div><div class="a" style="left:30px;top:0;width:12px;height:13px;background:#ede6de;border-right:1px solid #000;border-bottom:1px solid #000;box-shadow:inset -1px -1px 0 #a5a590, inset 1px 1px 0 #f3efe8"><div class="a" style="left:2px;top:4px;width:7px;height:1px;background:#000"></div><div class="a" style="left:3px;top:5px;width:5px;height:1px;background:#000"></div><div class="a" style="left:4px;top:6px;width:3px;height:1px;background:#000"></div><div class="a" style="left:5px;top:7px;width:1px;height:1px;background:#000"></div></div></div>
<div class="combo" style="left:237px;top:458px;width:35px;height:17px"><div class="a" style="left:0;top:0;width:18px;height:13px;background:#000"></div><div class="a" style="left:18px;top:0;width:13px;height:13px;background:#ede6de;border-right:1px solid #000;border-bottom:1px solid #000;box-shadow:inset -1px -1px 0 #a5a590, inset 1px 1px 0 #fff"><div class="a" style="left:3px;top:4px;width:7px;height:1px;background:#000"></div><div class="a" style="left:4px;top:5px;width:5px;height:1px;background:#000"></div><div class="a" style="left:5px;top:6px;width:3px;height:1px;background:#000"></div><div class="a" style="left:6px;top:7px;width:1px;height:1px;background:#000"></div></div></div>
<div class="combo" style="left:285px;top:458px;width:63px;height:17px"><div class="t" style="left:1px;top:-1px">Left</div><div class="a" style="left:47px;top:0;width:12px;height:13px;background:#ede6de;border-right:1px solid #000;border-bottom:1px solid #000;box-shadow:inset -1px -1px 0 #a5a590, inset 1px 1px 0 #f3efe8"><div class="a" style="left:2px;top:4px;width:7px;height:1px;background:#000"></div><div class="a" style="left:3px;top:5px;width:5px;height:1px;background:#000"></div><div class="a" style="left:4px;top:6px;width:3px;height:1px;background:#000"></div><div class="a" style="left:5px;top:7px;width:1px;height:1px;background:#000"></div></div></div>
<div class="combo" style="left:353px;top:458px;width:104px;height:17px"><div class="t" style="left:1px;top:-1px">Insert...</div><div class="a" style="left:88px;top:0;width:12px;height:13px;background:#ede6de;border-right:1px solid #000;border-bottom:1px solid #000;box-shadow:inset -1px -1px 0 #a5a590, inset 1px 1px 0 #f3efe8"><div class="a" style="left:2px;top:4px;width:7px;height:1px;background:#000"></div><div class="a" style="left:3px;top:5px;width:5px;height:1px;background:#000"></div><div class="a" style="left:4px;top:6px;width:3px;height:1px;background:#000"></div><div class="a" style="left:5px;top:7px;width:1px;height:1px;background:#000"></div></div></div>
<svg class="a" style="left:600px;top:459px" width="17" height="13" shape-rendering="crispEdges"><rect x="14" y="0" width="2" height="1" fill="#d8101a"/><rect x="13" y="1" width="1" height="1" fill="#d8101a"/><rect x="14" y="1" width="1" height="1" fill="#fff"/><rect x="15" y="1" width="2" height="1" fill="#d8101a"/><rect x="2" y="2" width="7" height="1" fill="#000"/><rect x="12" y="2" width="1" height="1" fill="#d8101a"/><rect x="13" y="2" width="1" height="1" fill="#fff"/><rect x="14" y="2" width="2" height="1" fill="#d8101a"/><rect x="1" y="3" width="1" height="1" fill="#000"/><rect x="2" y="3" width="6" height="1" fill="#fff"/><rect x="8" y="3" width="1" height="1" fill="#000"/><rect x="11" y="3" width="1" height="1" fill="#d8101a"/><rect x="12" y="3" width="1" height="1" fill="#fff"/><rect x="13" y="3" width="2" height="1" fill="#d8101a"/><rect x="0" y="4" width="1" height="1" fill="#000"/><rect x="1" y="4" width="7" height="1" fill="#fff"/><rect x="8" y="4" width="1" height="1" fill="#000"/><rect x="10" y="4" width="1" height="1" fill="#d8101a"/><rect x="11" y="4" width="1" height="1" fill="#fff"/><rect x="12" y="4" width="2" height="1" fill="#d8101a"/><rect x="0" y="5" width="1" height="1" fill="#000"/><rect x="1" y="5" width="7" height="1" fill="#fff"/><rect x="8" y="5" width="1" height="1" fill="#000"/><rect x="9" y="5" width="1" height="1" fill="#d8101a"/><rect x="10" y="5" width="1" height="1" fill="#fff"/><rect x="11" y="5" width="2" height="1" fill="#d8101a"/><rect x="0" y="6" width="1" height="1" fill="#000"/><rect x="1" y="6" width="1" height="1" fill="#fff"/><rect x="2" y="6" width="2" height="1" fill="#8a8a8a"/><rect x="4" y="6" width="1" height="1" fill="#fff"/><rect x="5" y="6" width="1" height="1" fill="#8a8a8a"/><rect x="6" y="6" width="2" height="1" fill="#fff"/><rect x="8" y="6" width="1" height="1" fill="#d8101a"/><rect x="9" y="6" width="1" height="1" fill="#fff"/><rect x="10" y="6" width="2" height="1" fill="#d8101a"/><rect x="0" y="7" width="1" height="1" fill="#000"/><rect x="1" y="7" width="6" height="1" fill="#fff"/><rect x="7" y="7" width="2" height="1" fill="#d0a060"/><rect x="9" y="7" width="2" height="1" fill="#d8101a"/><rect x="0" y="8" width="1" height="1" fill="#000"/><rect x="1" y="8" width="1" height="1" fill="#fff"/><rect x="2" y="8" width="3" height="1" fill="#8a8a8a"/><rect x="5" y="8" width="1" height="1" fill="#fff"/><rect x="6" y="8" width="3" height="1" fill="#d0a060"/><rect x="9" y="8" width="1" height="1" fill="#d8101a"/><rect x="0" y="9" width="1" height="1" fill="#000"/><rect x="1" y="9" width="5" height="1" fill="#fff"/><rect x="6" y="9" width="2" height="1" fill="#d0a060"/><rect x="8" y="9" width="1" height="1" fill="#000"/><rect x="0" y="10" width="1" height="1" fill="#000"/><rect x="1" y="10" width="1" height="1" fill="#fff"/><rect x="2" y="10" width="1" height="1" fill="#8a8a8a"/><rect x="3" y="10" width="1" height="1" fill="#fff"/><rect x="4" y="10" width="2" height="1" fill="#701010"/><rect x="6" y="10" width="2" height="1" fill="#fff"/><rect x="8" y="10" width="1" height="1" fill="#000"/><rect x="0" y="11" width="1" height="1" fill="#000"/><rect x="1" y="11" width="7" height="1" fill="#fff"/><rect x="8" y="11" width="1" height="1" fill="#000"/><rect x="0" y="12" width="9" height="1" fill="#000"/></svg>
<!-- right buttons -->
<div class="a" style="left:627px;top:425px;width:102px;height:22px;border:1px solid #000"></div>
<div class="btn" style="left:628px;top:426px;width:100px;height:20px"></div>
<svg class="a" style="left:656px;top:432px" width="16" height="8" shape-rendering="crispEdges"><rect x="10" y="0" width="4" height="1" fill="#e00010"/><rect x="0" y="1" width="7" height="1" fill="#e00010"/><rect x="9" y="1" width="1" height="1" fill="#e00010"/><rect x="10" y="1" width="1" height="1" fill="#fff4f0"/><rect x="11" y="1" width="2" height="1" fill="#e00010"/><rect x="13" y="1" width="1" height="1" fill="#fff4f0"/><rect x="14" y="1" width="1" height="1" fill="#e00010"/><rect x="8" y="2" width="1" height="1" fill="#e00010"/><rect x="9" y="2" width="1" height="1" fill="#fff4f0"/><rect x="10" y="2" width="1" height="1" fill="#e00010"/><rect x="11" y="2" width="2" height="1" fill="#fff4f0"/><rect x="13" y="2" width="1" height="1" fill="#e00010"/><rect x="14" y="2" width="1" height="1" fill="#fff4f0"/><rect x="15" y="2" width="1" height="1" fill="#e00010"/><rect x="1" y="3" width="6" height="1" fill="#e00010"/><rect x="8" y="3" width="2" height="1" fill="#e00010"/><rect x="10" y="3" width="1" height="1" fill="#fff4f0"/><rect x="11" y="3" width="2" height="1" fill="#e00010"/><rect x="13" y="3" width="1" height="1" fill="#fff4f0"/><rect x="14" y="3" width="2" height="1" fill="#e00010"/><rect x="8" y="4" width="2" height="1" fill="#e00010"/><rect x="10" y="4" width="1" height="1" fill="#fff4f0"/><rect x="11" y="4" width="2" height="1" fill="#e00010"/><rect x="13" y="4" width="1" height="1" fill="#fff4f0"/><rect x="14" y="4" width="2" height="1" fill="#e00010"/><rect x="2" y="5" width="5" height="1" fill="#e00010"/><rect x="8" y="5" width="1" height="1" fill="#e00010"/><rect x="9" y="5" width="1" height="1" fill="#fff4f0"/><rect x="10" y="5" width="1" height="1" fill="#e00010"/><rect x="11" y="5" width="2" height="1" fill="#fff4f0"/><rect x="13" y="5" width="1" height="1" fill="#e00010"/><rect x="14" y="5" width="1" height="1" fill="#fff4f0"/><rect x="15" y="5" width="1" height="1" fill="#e00010"/><rect x="9" y="6" width="1" height="1" fill="#e00010"/><rect x="10" y="6" width="1" height="1" fill="#fff4f0"/><rect x="11" y="6" width="2" height="1" fill="#e00010"/><rect x="13" y="6" width="1" height="1" fill="#fff4f0"/><rect x="14" y="6" width="1" height="1" fill="#e00010"/><rect x="10" y="7" width="4" height="1" fill="#e00010"/></svg>
<div class="t" style="left:674px;top:429px">Send</div>
<div class="btn" style="left:627px;top:452px;width:102px;height:22px"></div>
<svg class="a" style="left:651px;top:457px" width="10" height="12" shape-rendering="crispEdges"><rect x="3" y="0" width="1" height="1" fill="#000"/><rect x="5" y="0" width="1" height="1" fill="#000"/><rect x="7" y="0" width="1" height="1" fill="#000"/><rect x="2" y="1" width="1" height="1" fill="#000"/><rect x="3" y="1" width="1" height="1" fill="#f8c890"/><rect x="4" y="1" width="1" height="1" fill="#000"/><rect x="5" y="1" width="1" height="1" fill="#f8c890"/><rect x="6" y="1" width="1" height="1" fill="#000"/><rect x="7" y="1" width="1" height="1" fill="#f8c890"/><rect x="8" y="1" width="1" height="1" fill="#000"/><rect x="2" y="2" width="1" height="1" fill="#000"/><rect x="3" y="2" width="1" height="1" fill="#f8c890"/><rect x="4" y="2" width="1" height="1" fill="#000"/><rect x="5" y="2" width="1" height="1" fill="#f8c890"/><rect x="6" y="2" width="1" height="1" fill="#000"/><rect x="7" y="2" width="1" height="1" fill="#f8c890"/><rect x="8" y="2" width="2" height="1" fill="#000"/><rect x="2" y="3" width="1" height="1" fill="#000"/><rect x="3" y="3" width="1" height="1" fill="#f8c890"/><rect x="4" y="3" width="1" height="1" fill="#000"/><rect x="5" y="3" width="1" height="1" fill="#f8c890"/><rect x="6" y="3" width="1" height="1" fill="#000"/><rect x="7" y="3" width="1" height="1" fill="#f8c890"/><rect x="8" y="3" width="2" height="1" fill="#000"/><rect x="2" y="4" width="1" height="1" fill="#000"/><rect x="3" y="4" width="1" height="1" fill="#f8c890"/><rect x="4" y="4" width="1" height="1" fill="#000"/><rect x="5" y="4" width="1" height="1" fill="#f8c890"/><rect x="6" y="4" width="1" height="1" fill="#000"/><rect x="7" y="4" width="1" height="1" fill="#f8c890"/><rect x="8" y="4" width="2" height="1" fill="#000"/><rect x="0" y="5" width="3" height="1" fill="#000"/><rect x="3" y="5" width="6" height="1" fill="#f8c890"/><rect x="9" y="5" width="1" height="1" fill="#000"/><rect x="0" y="6" width="1" height="1" fill="#000"/><rect x="1" y="6" width="2" height="1" fill="#f8c890"/><rect x="3" y="6" width="1" height="1" fill="#000"/><rect x="4" y="6" width="5" height="1" fill="#f8c890"/><rect x="9" y="6" width="1" height="1" fill="#000"/><rect x="1" y="7" width="1" height="1" fill="#000"/><rect x="2" y="7" width="7" height="1" fill="#f8c890"/><rect x="9" y="7" width="1" height="1" fill="#000"/><rect x="2" y="8" width="1" height="1" fill="#000"/><rect x="3" y="8" width="6" height="1" fill="#f8c890"/><rect x="9" y="8" width="1" height="1" fill="#000"/><rect x="3" y="9" width="1" height="1" fill="#000"/><rect x="4" y="9" width="4" height="1" fill="#f8c890"/><rect x="8" y="9" width="1" height="1" fill="#000"/><rect x="4" y="10" width="1" height="1" fill="#000"/><rect x="5" y="10" width="3" height="1" fill="#f8c890"/><rect x="8" y="10" width="1" height="1" fill="#000"/><rect x="4" y="11" width="1" height="1" fill="#000"/><rect x="5" y="11" width="3" height="1" fill="#f8c890"/><rect x="8" y="11" width="1" height="1" fill="#000"/></svg>
<div class="t" style="left:664px;top:456px">Hand Up</div>
<div class="btn" style="left:627px;top:479px;width:102px;height:22px"></div>
<svg class="a" style="left:655px;top:485px" width="13" height="11" shape-rendering="crispEdges"><rect x="8" y="0" width="1" height="1" fill="#000"/><rect x="2" y="1" width="1" height="1" fill="#000"/><rect x="5" y="1" width="1" height="1" fill="#000"/><rect x="9" y="1" width="1" height="1" fill="#000"/><rect x="8" y="2" width="1" height="1" fill="#000"/><rect x="3" y="3" width="1" height="1" fill="#000"/><rect x="6" y="3" width="1" height="1" fill="#000"/><rect x="5" y="4" width="1" height="1" fill="#000"/><rect x="1" y="5" width="10" height="1" fill="#000"/><rect x="2" y="6" width="1" height="1" fill="#000"/><rect x="3" y="6" width="6" height="1" fill="#f4f4f4"/><rect x="9" y="6" width="1" height="1" fill="#000"/><rect x="10" y="6" width="1" height="1" fill="#f4f4f4"/><rect x="11" y="6" width="1" height="1" fill="#600000"/><rect x="2" y="7" width="1" height="1" fill="#000"/><rect x="3" y="7" width="6" height="1" fill="#f4f4f4"/><rect x="9" y="7" width="2" height="1" fill="#000"/><rect x="3" y="8" width="1" height="1" fill="#000"/><rect x="4" y="8" width="4" height="1" fill="#f4f4f4"/><rect x="8" y="8" width="1" height="1" fill="#000"/><rect x="0" y="9" width="13" height="1" fill="#000"/><rect x="2" y="10" width="9" height="1" fill="#000"/></svg>
<div class="t" style="left:669px;top:483px">Pause</div>
<div class="btn" style="left:627px;top:506px;width:102px;height:22px"></div>
<svg class="a" style="left:641px;top:512px" width="12" height="9" shape-rendering="crispEdges"><rect x="4" y="0" width="1" height="1" fill="#000"/><rect x="3" y="1" width="2" height="1" fill="#000"/><rect x="10" y="1" width="1" height="1" fill="#000"/><rect x="2" y="2" width="1" height="1" fill="#000"/><rect x="3" y="2" width="1" height="1" fill="#7070e8"/><rect x="4" y="2" width="1" height="1" fill="#000"/><rect x="8" y="2" width="1" height="1" fill="#000"/><rect x="11" y="2" width="1" height="1" fill="#000"/><rect x="0" y="3" width="2" height="1" fill="#000"/><rect x="2" y="3" width="2" height="1" fill="#7070e8"/><rect x="4" y="3" width="1" height="1" fill="#000"/><rect x="6" y="3" width="1" height="1" fill="#000"/><rect x="9" y="3" width="1" height="1" fill="#000"/><rect x="11" y="3" width="1" height="1" fill="#000"/><rect x="0" y="4" width="1" height="1" fill="#000"/><rect x="1" y="4" width="1" height="1" fill="#7070e8"/><rect x="2" y="4" width="1" height="1" fill="#a8a8ff"/><rect x="3" y="4" width="1" height="1" fill="#7070e8"/><rect x="4" y="4" width="1" height="1" fill="#000"/><rect x="7" y="4" width="1" height="1" fill="#000"/><rect x="9" y="4" width="1" height="1" fill="#000"/><rect x="11" y="4" width="1" height="1" fill="#000"/><rect x="0" y="5" width="2" height="1" fill="#000"/><rect x="2" y="5" width="2" height="1" fill="#7070e8"/><rect x="4" y="5" width="1" height="1" fill="#000"/><rect x="6" y="5" width="1" height="1" fill="#000"/><rect x="9" y="5" width="1" height="1" fill="#000"/><rect x="11" y="5" width="1" height="1" fill="#000"/><rect x="2" y="6" width="1" height="1" fill="#000"/><rect x="3" y="6" width="1" height="1" fill="#7070e8"/><rect x="4" y="6" width="1" height="1" fill="#000"/><rect x="8" y="6" width="1" height="1" fill="#000"/><rect x="11" y="6" width="1" height="1" fill="#000"/><rect x="3" y="7" width="2" height="1" fill="#000"/><rect x="10" y="7" width="1" height="1" fill="#000"/><rect x="4" y="8" width="1" height="1" fill="#000"/></svg>
<div class="t" style="left:655px;top:510px">Push to Talk</div>
<div class="btn" style="left:627px;top:533px;width:102px;height:22px"></div>
<svg class="a" style="left:657px;top:536px" width="14" height="16" shape-rendering="crispEdges"><rect x="5" y="0" width="9" height="1" fill="#000"/><rect x="5" y="1" width="1" height="1" fill="#000"/><rect x="6" y="1" width="7" height="1" fill="#d4a068"/><rect x="13" y="1" width="1" height="1" fill="#000"/><rect x="1" y="2" width="1" height="1" fill="#007838"/><rect x="2" y="2" width="1" height="1" fill="#58d8d0"/><rect x="3" y="2" width="1" height="1" fill="#007838"/><rect x="5" y="2" width="1" height="1" fill="#000"/><rect x="6" y="2" width="2" height="1" fill="#d4a068"/><rect x="8" y="2" width="1" height="1" fill="#000"/><rect x="9" y="2" width="4" height="1" fill="#d4a068"/><rect x="13" y="2" width="1" height="1" fill="#000"/><rect x="1" y="3" width="3" height="1" fill="#58d8d0"/><rect x="5" y="3" width="1" height="1" fill="#000"/><rect x="6" y="3" width="2" height="1" fill="#d4a068"/><rect x="8" y="3" width="1" height="1" fill="#f07020"/><rect x="9" y="3" width="1" height="1" fill="#000"/><rect x="10" y="3" width="1" height="1" fill="#d4a068"/><rect x="11" y="3" width="1" height="1" fill="#f07020"/><rect x="12" y="3" width="1" height="1" fill="#d4a068"/><rect x="13" y="3" width="1" height="1" fill="#000"/><rect x="1" y="4" width="1" height="1" fill="#007838"/><rect x="2" y="4" width="1" height="1" fill="#58d8d0"/><rect x="3" y="4" width="1" height="1" fill="#007838"/><rect x="5" y="4" width="1" height="1" fill="#000"/><rect x="6" y="4" width="5" height="1" fill="#d4a068"/><rect x="11" y="4" width="1" height="1" fill="#000"/><rect x="12" y="4" width="1" height="1" fill="#d4a068"/><rect x="13" y="4" width="1" height="1" fill="#000"/><rect x="5" y="5" width="1" height="1" fill="#000"/><rect x="6" y="5" width="5" height="1" fill="#d4a068"/><rect x="11" y="5" width="1" height="1" fill="#f07020"/><rect x="12" y="5" width="1" height="1" fill="#d4a068"/><rect x="13" y="5" width="1" height="1" fill="#000"/><rect x="0" y="6" width="4" height="1" fill="#007838"/><rect x="5" y="6" width="1" height="1" fill="#000"/><rect x="6" y="6" width="2" height="1" fill="#d4a068"/><rect x="8" y="6" width="2" height="1" fill="#007838"/><rect x="10" y="6" width="3" height="1" fill="#d4a068"/><rect x="13" y="6" width="1" height="1" fill="#000"/><rect x="0" y="7" width="1" height="1" fill="#007838"/><rect x="1" y="7" width="2" height="1" fill="#58d8d0"/><rect x="3" y="7" width="5" height="1" fill="#007838"/><rect x="8" y="7" width="1" height="1" fill="#58d8d0"/><rect x="9" y="7" width="1" height="1" fill="#007838"/><rect x="10" y="7" width="3" height="1" fill="#d4a068"/><rect x="13" y="7" width="1" height="1" fill="#000"/><rect x="0" y="8" width="1" height="1" fill="#007838"/><rect x="1" y="8" width="3" height="1" fill="#58d8d0"/><rect x="4" y="8" width="5" height="1" fill="#007838"/><rect x="9" y="8" width="4" height="1" fill="#d4a068"/><rect x="13" y="8" width="1" height="1" fill="#000"/><rect x="0" y="9" width="1" height="1" fill="#007838"/><rect x="1" y="9" width="2" height="1" fill="#58d8d0"/><rect x="3" y="9" width="2" height="1" fill="#007838"/><rect x="5" y="9" width="1" height="1" fill="#000"/><rect x="6" y="9" width="7" height="1" fill="#d4a068"/><rect x="13" y="9" width="1" height="1" fill="#000"/><rect x="0" y="10" width="1" height="1" fill="#007838"/><rect x="1" y="10" width="2" height="1" fill="#58d8d0"/><rect x="3" y="10" width="1" height="1" fill="#007838"/><rect x="5" y="10" width="1" height="1" fill="#000"/><rect x="6" y="10" width="7" height="1" fill="#d4a068"/><rect x="13" y="10" width="1" height="1" fill="#000"/><rect x="1" y="11" width="1" height="1" fill="#007838"/><rect x="2" y="11" width="1" height="1" fill="#58d8d0"/><rect x="3" y="11" width="1" height="1" fill="#007838"/><rect x="5" y="11" width="1" height="1" fill="#000"/><rect x="6" y="11" width="7" height="1" fill="#d4a068"/><rect x="13" y="11" width="1" height="1" fill="#000"/><rect x="1" y="12" width="1" height="1" fill="#007838"/><rect x="2" y="12" width="1" height="1" fill="#58d8d0"/><rect x="3" y="12" width="1" height="1" fill="#007838"/><rect x="5" y="12" width="1" height="1" fill="#000"/><rect x="6" y="12" width="7" height="1" fill="#d4a068"/><rect x="13" y="12" width="1" height="1" fill="#000"/><rect x="1" y="13" width="1" height="1" fill="#007838"/><rect x="2" y="13" width="1" height="1" fill="#58d8d0"/><rect x="3" y="13" width="1" height="1" fill="#007838"/><rect x="5" y="13" width="1" height="1" fill="#000"/><rect x="6" y="13" width="7" height="1" fill="#d4a068"/><rect x="13" y="13" width="1" height="1" fill="#000"/><rect x="1" y="14" width="1" height="1" fill="#007838"/><rect x="2" y="14" width="1" height="1" fill="#58d8d0"/><rect x="3" y="14" width="1" height="1" fill="#007838"/><rect x="5" y="14" width="9" height="1" fill="#000"/><rect x="1" y="15" width="3" height="1" fill="#007838"/></svg>
<div class="t" style="left:674px;top:537px">Invite</div>
<!-- status bar -->
<div class="a" style="left:7px;top:571px;width:733px;height:1px;background:#fff"></div>
</div></body></html>
